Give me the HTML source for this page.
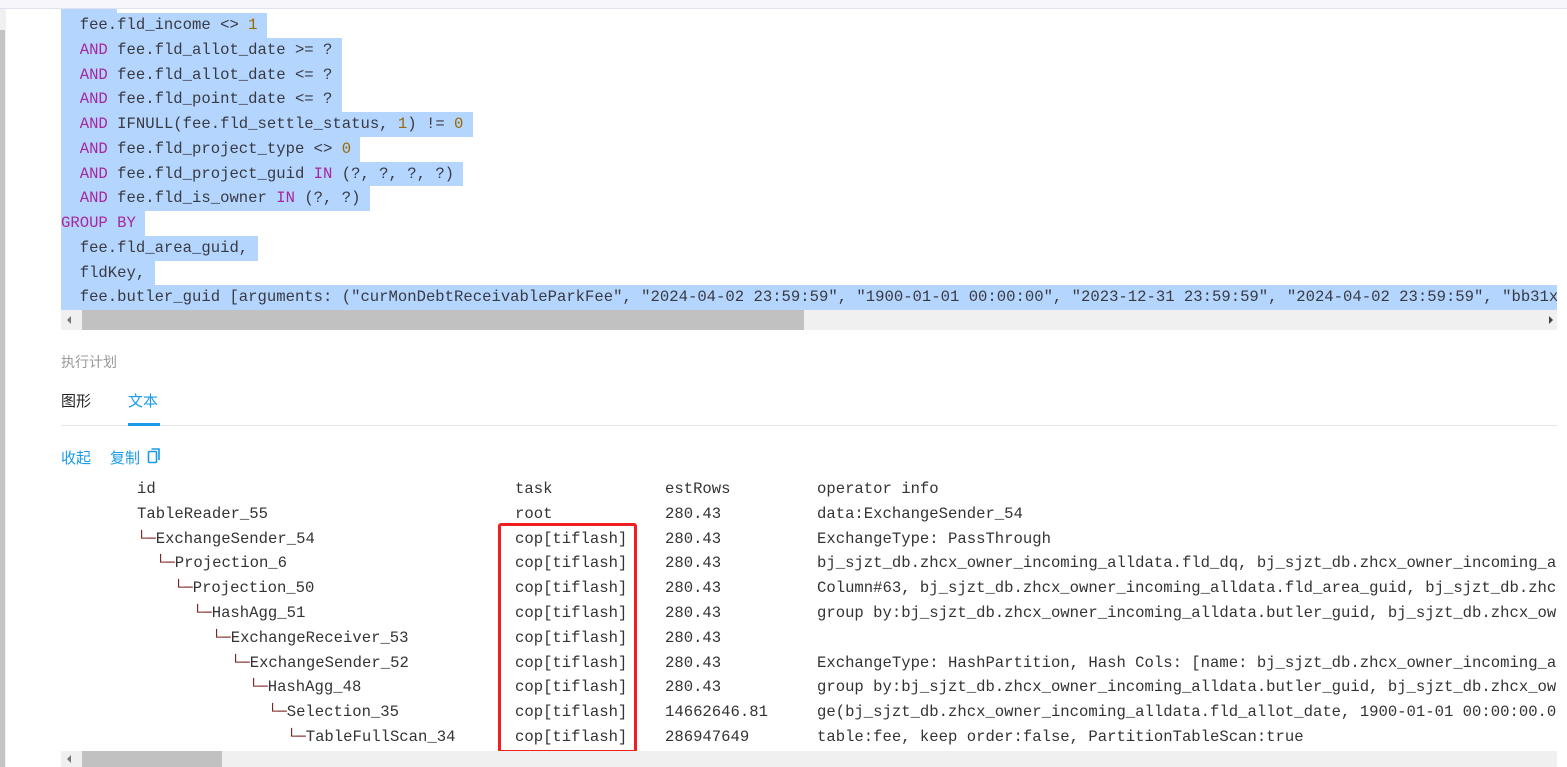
<!DOCTYPE html>
<html><head><meta charset="utf-8"><style>
body{margin:0;width:1567px;height:767px;overflow:hidden;background:#fff;position:relative;font-family:"Liberation Sans","Noto Sans CJK SC",sans-serif}
.top{position:absolute;left:0;top:0;width:1567px;height:8px;background:#f7f7fb;border-bottom:1px solid #e2e2ec}
.lb{position:absolute;left:0;top:9px;width:6px;height:758px;background:#f0f0f0}
.lb2{position:absolute;left:0;top:30px;width:5px;height:737px;background:#c4c4c4}
.code{position:absolute;left:61px;top:13px;width:1496px;height:297px;overflow:hidden;font-family:"Liberation Mono",monospace;font-size:15.6px;color:#383a42}
.code div{height:24.75px;line-height:24.75px;white-space:pre}
.code span.h{background:#b4d5fe;display:inline-block;height:24.75px}
.k{color:#a626a4}.n{color:#986801}
.sb{position:absolute;left:61px;width:1496px;background:#f0f0f0}
.th{position:absolute;background:#c1c1c1;top:0;bottom:0}
.plan{position:absolute;top:477px;left:61px;width:1496px;height:274px;overflow:hidden;font-family:"Liberation Mono",monospace;font-size:15.6px;color:#333}
.plan div{height:24.8px;line-height:24.8px;position:relative;white-space:pre}
.plan span{position:absolute}
.t{color:#7a1a1a}
</style></head><body>
<div class="top"></div><div class="lb"></div><div class="lb2"></div>
<div style="position:absolute;left:61px;top:9px;width:56px;height:4px;background:#b4d5fe"></div>
<div class="code"><div><span class="h">  fee.fld_income &lt;&gt; <span class="n">1</span> </span></div><div><span class="h">  <span class="k">AND</span> fee.fld_allot_date &gt;= ? </span></div><div><span class="h">  <span class="k">AND</span> fee.fld_allot_date &lt;= ? </span></div><div><span class="h">  <span class="k">AND</span> fee.fld_point_date &lt;= ? </span></div><div><span class="h">  <span class="k">AND</span> IFNULL(fee.fld_settle_status, <span class="n">1</span>) != <span class="n">0</span> </span></div><div><span class="h">  <span class="k">AND</span> fee.fld_project_type &lt;&gt; <span class="n">0</span> </span></div><div><span class="h">  <span class="k">AND</span> fee.fld_project_guid <span class="k">IN</span> (?, ?, ?, ?) </span></div><div><span class="h">  <span class="k">AND</span> fee.fld_is_owner <span class="k">IN</span> (?, ?) </span></div><div><span class="h"><span class="k">GROUP BY</span> </span></div><div><span class="h">  fee.fld_area_guid, </span></div><div><span class="h">  fldKey, </span></div><div><span class="h">  fee.butler_guid [arguments: ("curMonDebtReceivableParkFee", "2024-04-02 23:59:59", "1900-01-01 00:00:00", "2023-12-31 23:59:59", "2024-04-02 23:59:59", "bb31xxxxxxxxxxxxxxxx", "xxxxxxxxxxxxxxxxxxxxxxxxxxxx")</span></div></div>
<div class="sb" style="top:310px;height:20px"><div class="th" style="left:21px;width:722px"></div>
<div style="position:absolute;left:6px;top:6px;border:4px solid transparent;border-right:4px solid #777;border-left:0"></div>
<div style="position:absolute;right:4px;top:6px;border:4px solid transparent;border-left:4px solid #444;border-right:0"></div></div>
<div style="position:absolute;left:61px;top:352px;font-size:14px;color:#999">执行计划</div>
<div style="position:absolute;left:61px;top:390px;font-size:15px;color:#222">图形</div>
<div style="position:absolute;left:128px;top:390px;font-size:15px;color:#1a9be8">文本</div>
<div style="position:absolute;left:61px;top:425px;width:1496px;height:1px;background:#e8e8e8"></div>
<div style="position:absolute;left:128px;top:423px;width:32px;height:3px;background:#1a9be8"></div>
<div style="position:absolute;left:61px;top:447px;font-size:15px;color:#1a9be8">收起</div>
<div style="position:absolute;left:110px;top:447px;font-size:15px;color:#1a9be8">复制</div>
<svg style="position:absolute;left:147px;top:448px" width="14" height="16" viewBox="0 0 14 16"><rect x="1.5" y="3.5" width="8" height="11" rx="1" fill="none" stroke="#1a9be8" stroke-width="1.6"/><path d="M4.5 1h7.5v11" fill="none" stroke="#1a9be8" stroke-width="1.6"/></svg>
<div class="plan"><div><span style="left:76px">id</span><span style="left:454px">task</span><span style="left:604px">estRows</span><span style="left:756px">operator info</span></div><div><span style="left:76px">TableReader_55</span><span style="left:454px">root</span><span style="left:604px">280.43</span><span style="left:756px">data:ExchangeSender_54</span></div><div><span style="left:76px"><span class="t" style="position:static">└─</span>ExchangeSender_54</span><span style="left:454px">cop[tiflash]</span><span style="left:604px">280.43</span><span style="left:756px">ExchangeType: PassThrough</span></div><div><span style="left:95px"><span class="t" style="position:static">└─</span>Projection_6</span><span style="left:454px">cop[tiflash]</span><span style="left:604px">280.43</span><span style="left:756px">bj_sjzt_db.zhcx_owner_incoming_alldata.fld_dq, bj_sjzt_db.zhcx_owner_incoming_alldata</span></div><div><span style="left:113px"><span class="t" style="position:static">└─</span>Projection_50</span><span style="left:454px">cop[tiflash]</span><span style="left:604px">280.43</span><span style="left:756px">Column#63, bj_sjzt_db.zhcx_owner_incoming_alldata.fld_area_guid, bj_sjzt_db.zhcx_owner</span></div><div><span style="left:132px"><span class="t" style="position:static">└─</span>HashAgg_51</span><span style="left:454px">cop[tiflash]</span><span style="left:604px">280.43</span><span style="left:756px">group by:bj_sjzt_db.zhcx_owner_incoming_alldata.butler_guid, bj_sjzt_db.zhcx_owner_inc</span></div><div><span style="left:151px"><span class="t" style="position:static">└─</span>ExchangeReceiver_53</span><span style="left:454px">cop[tiflash]</span><span style="left:604px">280.43</span></div><div><span style="left:170px"><span class="t" style="position:static">└─</span>ExchangeSender_52</span><span style="left:454px">cop[tiflash]</span><span style="left:604px">280.43</span><span style="left:756px">ExchangeType: HashPartition, Hash Cols: [name: bj_sjzt_db.zhcx_owner_incoming_alldata</span></div><div><span style="left:188px"><span class="t" style="position:static">└─</span>HashAgg_48</span><span style="left:454px">cop[tiflash]</span><span style="left:604px">280.43</span><span style="left:756px">group by:bj_sjzt_db.zhcx_owner_incoming_alldata.butler_guid, bj_sjzt_db.zhcx_owner_inc</span></div><div><span style="left:207px"><span class="t" style="position:static">└─</span>Selection_35</span><span style="left:454px">cop[tiflash]</span><span style="left:604px">14662646.81</span><span style="left:756px">ge(bj_sjzt_db.zhcx_owner_incoming_alldata.fld_allot_date, 1900-01-01 00:00:00.000000)</span></div><div><span style="left:226px"><span class="t" style="position:static">└─</span>TableFullScan_34</span><span style="left:454px">cop[tiflash]</span><span style="left:604px">286947649</span><span style="left:756px">table:fee, keep order:false, PartitionTableScan:true</span></div></div>
<div style="position:absolute;left:498px;top:523px;width:133px;height:224px;border:3px solid #f01e1e;border-radius:3px"></div>
<div class="sb" style="top:751px;height:16px"><div class="th" style="left:21px;width:140px"></div>
<div style="position:absolute;left:6px;top:4px;border:4px solid transparent;border-right:4px solid #777;border-left:0"></div></div>
</body></html>
